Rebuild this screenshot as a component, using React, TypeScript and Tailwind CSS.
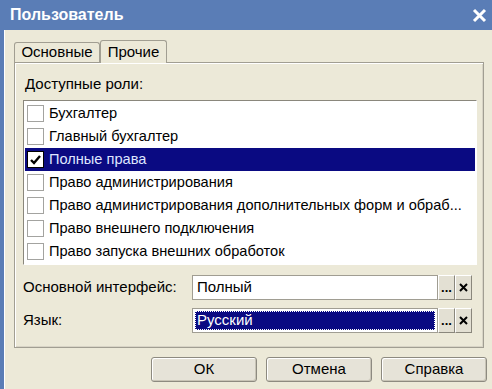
const roles = [
  { name: "Бухгалтер", checked: false },
  { name: "Главный бухгалтер", checked: false },
  { name: "Полные права", checked: true },
  { name: "Право администрирования", checked: false },
  { name: "Право администрирования дополнительных форм и обраб...", checked: false },
  { name: "Право внешнего подключения", checked: false },
  { name: "Право запуска внешних обработок", checked: false },
];

function Check({ checked }: { checked: boolean }) {
  return (
    <span
      className={
        "flex h-[17px] w-[17px] shrink-0 items-center justify-center bg-white border " +
        (checked ? "border-black" : "border-[#a3a3a0]")
      }
    >
      {checked && (
        <svg width="11" height="10" viewBox="0 0 11 10">
          <path d="M1 5 L4 8 L10 1" fill="none" stroke="#000" strokeWidth="2.4" />
        </svg>
      )}
    </span>
  );
}

function SmallBtn({ children }: { children: React.ReactNode }) {
  return (
    <div className="flex h-full w-[17px] items-center justify-center border border-t-white border-l-white border-r-[#8a877c] border-b-[#8a877c] bg-[#e3e0d3] text-[13px] font-bold leading-none text-black">
      {children}
    </div>
  );
}

function Field({ label, value, selected }: { label: string; value: string; selected?: boolean }) {
  return (
    <div className="flex h-[25px] items-center">
      <div className="w-[169px] shrink-0 text-[15px] text-black">{label}</div>
      <div className="flex h-full w-[246px] items-center border border-[#a09d92] bg-white p-[2px]">
        {selected ? (
          <div className="flex h-full w-full items-center border border-dotted border-white bg-[#0a0a82] px-[1px] text-[15px] text-white">
            {value}
          </div>
        ) : (
          <div className="px-[2px] text-[15px] text-black">{value}</div>
        )}
      </div>
      <SmallBtn>...</SmallBtn>
      <SmallBtn>
        <svg width="9" height="9" viewBox="0 0 9 9">
          <path d="M1 1 L8 8 M8 1 L1 8" stroke="#000" strokeWidth="2" />
        </svg>
      </SmallBtn>
    </div>
  );
}

function DlgButton({ children }: { children: React.ReactNode }) {
  return (
    <button className="h-[25px] w-[106px] rounded-[3px] border border-[#8d8a80] bg-[#e6e3d8] text-[15px] text-black shadow-[inset_1px_1px_0_#fff,inset_-1px_-1px_0_#c8c4b6]">
      {children}
    </button>
  );
}

export default function App() {
  return (
    <div
      className="flex h-[389px] w-[492px] flex-col overflow-hidden bg-[#ece9d8]"
      style={{ fontFamily: '"Liberation Sans", Arial, sans-serif' }}
    >
      <div className="flex h-[30px] shrink-0 items-center justify-between bg-[#5a7db6] pl-[10px] pr-[5px]">
        <span className="text-[16px] font-bold text-white">Пользователь</span>
        <svg width="15" height="15" viewBox="0 0 15 15">
          <path d="M2 2 L13 13 M13 2 L2 13" stroke="#fff" strokeWidth="3" />
        </svg>
      </div>

      <div className="flex flex-1 flex-col border-l-[4px] border-[#5a7db6]">
        <div className="flex flex-1 flex-col border-l border-white pl-[9px] pt-[10px]">
          <div className="flex h-[22px] items-end">
            <div className="flex h-[20px] w-[86px] items-center justify-center rounded-t-[3px] border border-b-0 border-[#a19e92] text-[15px] text-black">
              Основные
            </div>
            <div className="relative z-10 -mb-px flex h-[23px] w-[67px] items-center justify-center rounded-t-[3px] border border-b-0 border-[#a19e92] bg-[#ece9d8] text-[15px] text-black">
              Прочие
            </div>
          </div>

          <div className="flex h-[286px] w-[470px] flex-col border border-[#a19e92] px-[8px] pt-[13px] shadow-[inset_1px_1px_0_#fff,inset_-1px_-1px_0_#d8d4c6]">
            <div className="h-[16px] pl-[2px] text-[15px] leading-[16px] text-black">Доступные роли:</div>
            <div className="mt-[8px] flex h-[165px] w-[454px] flex-col border border-t-[#8a877c] border-l-[#8a877c] border-r-white border-b-white bg-white p-px">
              {roles.map((r) => (
                <div
                  key={r.name}
                  className={
                    "flex h-[23px] shrink-0 items-center gap-[5px] pl-[2px] text-[14.6px] " +
                    (r.checked ? "bg-[#0a0a82] text-[#dfe6ff]" : "text-black")
                  }
                >
                  <Check checked={r.checked} />
                  <span className="whitespace-nowrap">{r.name}</span>
                </div>
              ))}
            </div>

            <div className="mt-[10px] flex flex-col gap-[8px]">
              <Field label="Основной интерфейс:" value="Полный" />
              <Field label="Язык:" value="Русский" selected />
            </div>
          </div>

          <div className="mt-[9px] flex justify-end gap-[9px] pr-[5px]">
            <DlgButton>ОК</DlgButton>
            <DlgButton>Отмена</DlgButton>
            <DlgButton>Справка</DlgButton>
          </div>
        </div>
      </div>
    </div>
  );
}
